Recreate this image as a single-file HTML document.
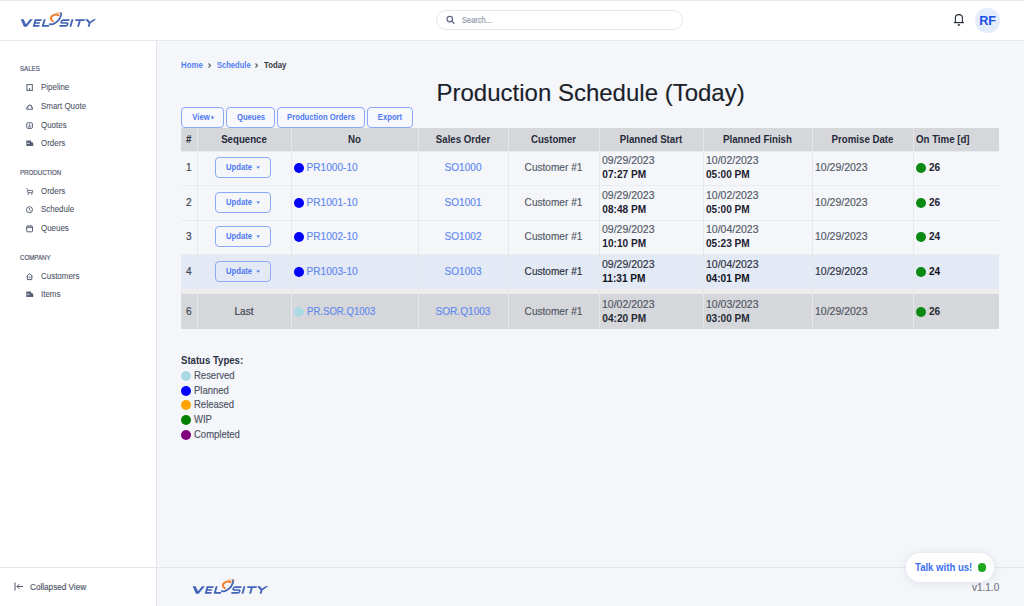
<!DOCTYPE html>
<html><head><meta charset="utf-8">
<style>
*{box-sizing:border-box;margin:0;padding:0}
html,body{width:1024px;height:606px;overflow:hidden;background:#fff;font-family:"Liberation Sans",sans-serif;color:#333}
.abs{position:absolute}
.t{position:absolute;white-space:nowrap;line-height:1}
.r{-webkit-text-stroke:0.15px currentColor}
#topline{left:0;top:0;width:1024px;height:1px;background:#e9eaea}
#header{left:0;top:1px;width:1024px;height:40px;background:#fff;border-bottom:1px solid #e6e8ef}
#sidebar{left:0;top:41px;width:157px;height:565px;background:#fff;border-right:1px solid #e4e6ee}
#main{left:157px;top:41px;width:867px;height:526px;background:#f4f6fa}
#footer{left:157px;top:567px;width:867px;height:39px;background:#f4f6fa;border-top:1px solid #e4e6ee}
#sfoot{left:0;top:567px;width:156px;height:39px;background:#fff;border-top:1px solid #e4e6ee}
.search{left:436px;top:10px;width:247px;height:20px;border:1px solid #e2e5ec;border-radius:10px;background:#fff}
.btn{position:absolute;height:21px;border:1px solid #8aa9f8;border-radius:4px;background:#f6f8fd}
.dot{position:absolute;width:10px;height:10px;border-radius:50%}
</style></head><body>
<div id="topline" class="abs"></div>
<div id="header" class="abs"></div>
<div id="sidebar" class="abs"></div>
<div id="main" class="abs"></div>
<div id="sfoot" class="abs"></div>
<div id="footer" class="abs"></div>
<div class="abs search"></div>
<svg class="abs" style="left:446px;top:15px" width="10" height="10" viewBox="0 0 10 10"><circle cx="3.8" cy="4.1" r="2.75" fill="none" stroke="#5f6883" stroke-width="1.2"/><line x1="5.8" y1="6.1" x2="7.9" y2="8.3" stroke="#5f6883" stroke-width="1.3" stroke-linecap="round"/></svg>
<div class="t r" style="top:16px;font-size:8.3px;color:#8d94a6;left:461.50px;transform:scaleX(0.9);transform-origin:0 0;">Search...</div>
<svg class="abs" style="left:948px;top:10px" width="22" height="20" viewBox="948 10 22 20"><path d="M955.4 22.3 V17.6 C955.4 15.6 957 14.6 958.9 14.6 C960.8 14.6 962.4 15.6 962.4 17.6 V22.3" fill="none" stroke="#252a38" stroke-width="1.1"/><path d="M953.9 22.6 H963.9" stroke="#252a38" stroke-width="1.2"/><path d="M957.5 24.2 H960.3 Q960 25.9 958.9 25.9 Q957.8 25.9 957.5 24.2 Z" fill="#252a38"/></svg>
<div class="abs" style="left:975px;top:8px;width:24.5px;height:24.5px;border-radius:50%;background:#e4ecfc"></div>
<div class="t" style="top:15px;font-size:12.6px;color:#1a52e4;font-weight:bold;left:979.20px;">RF</div>
<div class="t r" style="top:66px;font-size:6.4px;color:#596075;left:19.80px;transform:scaleX(0.96);transform-origin:0 0;-webkit-text-stroke:0.2px #596075;">SALES</div>
<div class="t r" style="top:83px;font-size:8.6px;color:#4d5467;left:40.80px;transform:scaleX(0.925);transform-origin:0 0;-webkit-text-stroke:0.08px #4d5467;">Pipeline</div>
<svg class="abs" style="left:26px;top:83.7px" width="7" height="7" viewBox="0 0 7 7"><rect x="0.9" y="0.6" width="5.4" height="6" fill="none" stroke="#566076" stroke-width="1"/><rect x="3.1" y="4.2" width="1.1" height="1.8" fill="#566076"/></svg>
<div class="t r" style="top:102px;font-size:8.6px;color:#4d5467;left:40.80px;transform:scaleX(0.925);transform-origin:0 0;-webkit-text-stroke:0.08px #4d5467;">Smart Quote</div>
<svg class="abs" style="left:26px;top:102.7px" width="7" height="7" viewBox="0 0 7 7"><path d="M0.9 6.2 C0.6 5 1.2 4.1 2 3.9 C2.3 2.6 3 2 3.8 2 C4.8 2 5.5 2.9 5.5 3.9 C6.2 4.1 6.6 5.2 6.2 6.2 Z" fill="none" stroke="#566076" stroke-width="1.1"/></svg>
<div class="t r" style="top:121px;font-size:8.6px;color:#4d5467;left:40.80px;transform:scaleX(0.925);transform-origin:0 0;-webkit-text-stroke:0.08px #4d5467;">Quotes</div>
<svg class="abs" style="left:26px;top:121.7px" width="7" height="7" viewBox="0 0 7 7"><rect x="0.8" y="0.8" width="5.6" height="5.6" rx="1" fill="none" stroke="#566076" stroke-width="1"/><path d="M2 4.9 H5.2" stroke="#566076" stroke-width="0.9"/><rect x="2.9" y="2.3" width="1.4" height="1.5" fill="#566076"/></svg>
<div class="t r" style="top:139px;font-size:8.6px;color:#4d5467;left:40.80px;transform:scaleX(0.925);transform-origin:0 0;-webkit-text-stroke:0.08px #4d5467;">Orders</div>
<svg class="abs" style="left:26px;top:139.7px" width="8" height="7" viewBox="0 0 8 7"><path d="M0.3 0.5 H5 V2 H6.2 L7.3 3.6 V6 H0.3 Z" fill="#566076"/><path d="M1 3.3 H3.5" stroke="#fff" stroke-width="0.8"/></svg>
<div class="t r" style="top:170px;font-size:6.4px;color:#596075;left:19.80px;transform:scaleX(0.96);transform-origin:0 0;-webkit-text-stroke:0.2px #596075;">PRODUCTION</div>
<div class="t r" style="top:187px;font-size:8.6px;color:#4d5467;left:40.80px;transform:scaleX(0.925);transform-origin:0 0;-webkit-text-stroke:0.08px #4d5467;">Orders</div>
<svg class="abs" style="left:26px;top:187.7px" width="8" height="8" viewBox="0 0 8 8"><path d="M0.4 0 L1.7 1.4 V4.6 H6.6 V2.4 H1.9" fill="none" stroke="#566076" stroke-width="0.85"/><circle cx="2.5" cy="5.9" r="0.75" fill="#566076"/><circle cx="5.8" cy="5.9" r="0.75" fill="#566076"/></svg>
<div class="t r" style="top:205px;font-size:8.6px;color:#4d5467;left:40.80px;transform:scaleX(0.925);transform-origin:0 0;-webkit-text-stroke:0.08px #4d5467;">Schedule</div>
<svg class="abs" style="left:26px;top:206.2px" width="8" height="8" viewBox="0 0 8 8"><circle cx="3.5" cy="3.7" r="3" fill="none" stroke="#566076" stroke-width="1"/><path d="M3.5 2 V3.8 L4.8 4.8" fill="none" stroke="#566076" stroke-width="0.9"/></svg>
<div class="t r" style="top:224px;font-size:8.6px;color:#4d5467;left:40.80px;transform:scaleX(0.925);transform-origin:0 0;-webkit-text-stroke:0.08px #4d5467;">Queues</div>
<svg class="abs" style="left:26px;top:224.7px" width="8" height="8" viewBox="0 0 8 8"><rect x="0.7" y="1" width="5.8" height="5.8" rx="0.8" fill="none" stroke="#566076" stroke-width="1"/><path d="M0.7 2.6 H6.5 M2.2 0.2 V1.6 M5 0.2 V1.6" stroke="#566076" stroke-width="0.9"/></svg>
<div class="t r" style="top:255px;font-size:6.4px;color:#596075;left:19.80px;transform:scaleX(0.96);transform-origin:0 0;-webkit-text-stroke:0.2px #596075;">COMPANY</div>
<div class="t r" style="top:272px;font-size:8.6px;color:#4d5467;left:40.80px;transform:scaleX(0.925);transform-origin:0 0;-webkit-text-stroke:0.08px #4d5467;">Customers</div>
<svg class="abs" style="left:26px;top:272.7px" width="8" height="8" viewBox="0 0 8 8"><path d="M0.6 3.4 L3.6 0.7 L6.6 3.4 M1.4 2.8 V6.6 H5.8 V2.8" fill="none" stroke="#566076" stroke-width="1"/><path d="M2.6 4.8 C2.6 3.8 4.6 3.8 4.6 4.8" fill="none" stroke="#566076" stroke-width="0.9"/></svg>
<div class="t r" style="top:290px;font-size:8.6px;color:#4d5467;left:40.80px;transform:scaleX(0.925);transform-origin:0 0;-webkit-text-stroke:0.08px #4d5467;">Items</div>
<svg class="abs" style="left:26px;top:291.0px" width="8" height="7" viewBox="0 0 8 7"><path d="M0.3 0.5 H5 V2 H6.2 L7.3 3.6 V6 H0.3 Z" fill="#566076"/><path d="M1 3.3 H3.5" stroke="#fff" stroke-width="0.8"/></svg>
<div class="t" style="top:61px;font-size:8.5px;color:#5680f2;font-weight:bold;left:181.00px;transform:scaleX(0.92);transform-origin:0 0;">Home</div>
<div class="t" style="top:61px;font-size:8.5px;color:#5680f2;font-weight:bold;left:216.60px;transform:scaleX(0.89);transform-origin:0 0;">Schedule</div>
<div class="t" style="top:61px;font-size:8.5px;color:#343946;font-weight:bold;left:263.70px;transform:scaleX(0.92);transform-origin:0 0;">Today</div>
<svg class="abs" style="left:207.3px;top:61.5px" width="5" height="7" viewBox="0 0 5 7"><path d="M1.5 1.5 L3.5 3.5 L1.5 5.5" fill="none" stroke="#5c6272" stroke-width="1.15"/></svg>
<svg class="abs" style="left:254.3px;top:61.5px" width="5" height="7" viewBox="0 0 5 7"><path d="M1.5 1.5 L3.5 3.5 L1.5 5.5" fill="none" stroke="#5c6272" stroke-width="1.15"/></svg>
<div class="t r" style="top:81px;font-size:24px;color:#1b1f2b;left:436.50px;">Production Schedule (Today)</div>
<div class="btn" style="left:181px;top:107px;width:43px"></div>
<div class="t" style="top:113px;font-size:8.3px;color:#4f78f0;font-weight:bold;left:170.50px;width:60px;text-align:center;transform:scaleX(0.925);transform-origin:50% 0;">View</div>
<svg class="abs" style="left:210.5px;top:115px" width="4" height="5" viewBox="0 0 4 5"><path d="M0.6 0.4 L3.2 2.5 L0.6 4.6 Z" fill="#4f78f0"/></svg>
<div class="btn" style="left:226px;top:107px;width:49px"></div>
<div class="t" style="top:113px;font-size:8.3px;color:#4f78f0;font-weight:bold;left:200.50px;width:100px;text-align:center;transform:scaleX(0.925);transform-origin:50% 0;">Queues</div>
<div class="btn" style="left:277px;top:107px;width:88px"></div>
<div class="t" style="top:113px;font-size:8.3px;color:#4f78f0;font-weight:bold;left:271.00px;width:100px;text-align:center;transform:scaleX(0.925);transform-origin:50% 0;">Production Orders</div>
<div class="btn" style="left:367px;top:107px;width:45.5px"></div>
<div class="t" style="top:113px;font-size:8.3px;color:#4f78f0;font-weight:bold;left:339.75px;width:100px;text-align:center;transform:scaleX(0.925);transform-origin:50% 0;">Export</div>
<div class="abs" style="left:181px;top:128px;width:818px;height:22.5px;background:#d6d7da"></div>
<div class="abs" style="left:181px;top:150.5px;width:818px;height:34.80000000000001px;background:#f4f6fa;border-top:1px solid #e9ebf0"></div>
<div class="abs" style="left:181px;top:185.3px;width:818px;height:34.29999999999998px;background:#f4f6fa;border-top:1px solid #e9ebf0"></div>
<div class="abs" style="left:181px;top:219.6px;width:818px;height:34.599999999999994px;background:#f4f6fa;border-top:1px solid #e9ebf0"></div>
<div class="abs" style="left:181px;top:254.2px;width:818px;height:34.80000000000001px;background:#e3e9f5;border-top:1px solid #e9ebf0"></div>
<div class="abs" style="left:181px;top:289px;width:818px;height:5px;background:#ececec"></div>
<div class="abs" style="left:181px;top:294px;width:818px;height:35px;background:#d6d7da"></div>
<div class="abs" style="left:197px;top:128px;width:1px;height:201px;background:#e6e8ed"></div>
<div class="abs" style="left:291px;top:128px;width:1px;height:201px;background:#e6e8ed"></div>
<div class="abs" style="left:418px;top:128px;width:1px;height:201px;background:#e6e8ed"></div>
<div class="abs" style="left:508px;top:128px;width:1px;height:201px;background:#e6e8ed"></div>
<div class="abs" style="left:599px;top:128px;width:1px;height:201px;background:#e6e8ed"></div>
<div class="abs" style="left:703px;top:128px;width:1px;height:201px;background:#e6e8ed"></div>
<div class="abs" style="left:812px;top:128px;width:1px;height:201px;background:#e6e8ed"></div>
<div class="abs" style="left:913px;top:128px;width:1px;height:201px;background:#e6e8ed"></div>
<div class="t" style="top:135px;font-size:10.2px;color:#252b3a;font-weight:bold;left:185.50px;transform:scaleX(0.95);transform-origin:0 0;">#</div>
<div class="t" style="top:135px;font-size:10.2px;color:#252b3a;font-weight:bold;left:197.00px;width:94px;text-align:center;transform:scaleX(0.95);transform-origin:50% 0;">Sequence</div>
<div class="t" style="top:135px;font-size:10.2px;color:#252b3a;font-weight:bold;left:291.00px;width:127px;text-align:center;transform:scaleX(0.95);transform-origin:50% 0;">No</div>
<div class="t" style="top:135px;font-size:10.2px;color:#252b3a;font-weight:bold;left:418.00px;width:90px;text-align:center;transform:scaleX(0.95);transform-origin:50% 0;">Sales Order</div>
<div class="t" style="top:135px;font-size:10.2px;color:#252b3a;font-weight:bold;left:508.00px;width:91px;text-align:center;transform:scaleX(0.95);transform-origin:50% 0;">Customer</div>
<div class="t" style="top:135px;font-size:10.2px;color:#252b3a;font-weight:bold;left:599.00px;width:104px;text-align:center;transform:scaleX(0.95);transform-origin:50% 0;">Planned Start</div>
<div class="t" style="top:135px;font-size:10.2px;color:#252b3a;font-weight:bold;left:703.00px;width:109px;text-align:center;transform:scaleX(0.95);transform-origin:50% 0;">Planned Finish</div>
<div class="t" style="top:135px;font-size:10.2px;color:#252b3a;font-weight:bold;left:812.00px;width:101px;text-align:center;transform:scaleX(0.95);transform-origin:50% 0;">Promise Date</div>
<div class="t" style="top:135px;font-size:10.2px;color:#252b3a;font-weight:bold;left:916.00px;transform:scaleX(0.95);transform-origin:0 0;">On Time [d]</div>
<div class="t r" style="top:163px;font-size:10.1px;color:#3b4150;left:186.00px;">1</div>
<div class="btn" style="left:215px;top:157.0px;width:56px;background:transparent"></div>
<div class="t" style="top:163px;font-size:8.3px;color:#4f78f0;font-weight:bold;left:209.00px;width:60px;text-align:center;transform:scaleX(0.93);transform-origin:50% 0;">Update</div>
<svg class="abs" style="left:256.3px;top:165.8px" width="5" height="4" viewBox="0 0 5 4"><path d="M0.3 0.5 H4.1 L2.2 2.7 Z" fill="#4f78f0"/></svg>
<div class="dot" style="left:293.6px;top:163.0px;background:#0000ff"></div>
<div class="t r" style="top:163px;font-size:10.1px;color:#6189ef;left:306.60px;">PR1000-10</div>
<div class="t r" style="top:163px;font-size:10.1px;color:#6189ef;left:418.00px;width:90px;text-align:center;">SO1000</div>
<div class="t r" style="top:163px;font-size:10.1px;color:#535966;left:508.00px;width:91px;text-align:center;">Customer #1</div>
<div class="t r" style="top:156px;font-size:10.1px;color:#535966;left:602.30px;transform:scaleX(1.04);transform-origin:0 0;">09/29/2023</div>
<div class="t" style="top:170px;font-size:10.1px;color:#1d2130;font-weight:bold;left:602.30px;">07:27 PM</div>
<div class="t r" style="top:156px;font-size:10.1px;color:#535966;left:706.00px;transform:scaleX(1.04);transform-origin:0 0;">10/02/2023</div>
<div class="t" style="top:170px;font-size:10.1px;color:#1d2130;font-weight:bold;left:706.00px;">05:00 PM</div>
<div class="t r" style="top:163px;font-size:10.1px;color:#535966;left:815.00px;transform:scaleX(1.04);transform-origin:0 0;">10/29/2023</div>
<div class="dot" style="left:916px;top:163.0px;background:#0a8a12"></div>
<div class="t" style="top:163px;font-size:10.1px;color:#1d2130;font-weight:bold;left:929.00px;">26</div>
<div class="t r" style="top:198px;font-size:10.1px;color:#3b4150;left:186.00px;">2</div>
<div class="btn" style="left:215px;top:192.0px;width:56px;background:transparent"></div>
<div class="t" style="top:198px;font-size:8.3px;color:#4f78f0;font-weight:bold;left:209.00px;width:60px;text-align:center;transform:scaleX(0.93);transform-origin:50% 0;">Update</div>
<svg class="abs" style="left:256.3px;top:200.8px" width="5" height="4" viewBox="0 0 5 4"><path d="M0.3 0.5 H4.1 L2.2 2.7 Z" fill="#4f78f0"/></svg>
<div class="dot" style="left:293.6px;top:198.0px;background:#0000ff"></div>
<div class="t r" style="top:198px;font-size:10.1px;color:#6189ef;left:306.60px;">PR1001-10</div>
<div class="t r" style="top:198px;font-size:10.1px;color:#6189ef;left:418.00px;width:90px;text-align:center;">SO1001</div>
<div class="t r" style="top:198px;font-size:10.1px;color:#535966;left:508.00px;width:91px;text-align:center;">Customer #1</div>
<div class="t r" style="top:191px;font-size:10.1px;color:#535966;left:602.30px;transform:scaleX(1.04);transform-origin:0 0;">09/29/2023</div>
<div class="t" style="top:205px;font-size:10.1px;color:#1d2130;font-weight:bold;left:602.30px;">08:48 PM</div>
<div class="t r" style="top:191px;font-size:10.1px;color:#535966;left:706.00px;transform:scaleX(1.04);transform-origin:0 0;">10/02/2023</div>
<div class="t" style="top:205px;font-size:10.1px;color:#1d2130;font-weight:bold;left:706.00px;">05:00 PM</div>
<div class="t r" style="top:198px;font-size:10.1px;color:#535966;left:815.00px;transform:scaleX(1.04);transform-origin:0 0;">10/29/2023</div>
<div class="dot" style="left:916px;top:198.0px;background:#0a8a12"></div>
<div class="t" style="top:198px;font-size:10.1px;color:#1d2130;font-weight:bold;left:929.00px;">26</div>
<div class="t r" style="top:232px;font-size:10.1px;color:#3b4150;left:186.00px;">3</div>
<div class="btn" style="left:215px;top:226.0px;width:56px;background:transparent"></div>
<div class="t" style="top:232px;font-size:8.3px;color:#4f78f0;font-weight:bold;left:209.00px;width:60px;text-align:center;transform:scaleX(0.93);transform-origin:50% 0;">Update</div>
<svg class="abs" style="left:256.3px;top:234.8px" width="5" height="4" viewBox="0 0 5 4"><path d="M0.3 0.5 H4.1 L2.2 2.7 Z" fill="#4f78f0"/></svg>
<div class="dot" style="left:293.6px;top:232.0px;background:#0000ff"></div>
<div class="t r" style="top:232px;font-size:10.1px;color:#6189ef;left:306.60px;">PR1002-10</div>
<div class="t r" style="top:232px;font-size:10.1px;color:#6189ef;left:418.00px;width:90px;text-align:center;">SO1002</div>
<div class="t r" style="top:232px;font-size:10.1px;color:#535966;left:508.00px;width:91px;text-align:center;">Customer #1</div>
<div class="t r" style="top:225px;font-size:10.1px;color:#535966;left:602.30px;transform:scaleX(1.04);transform-origin:0 0;">09/29/2023</div>
<div class="t" style="top:239px;font-size:10.1px;color:#1d2130;font-weight:bold;left:602.30px;">10:10 PM</div>
<div class="t r" style="top:225px;font-size:10.1px;color:#535966;left:706.00px;transform:scaleX(1.04);transform-origin:0 0;">10/04/2023</div>
<div class="t" style="top:239px;font-size:10.1px;color:#1d2130;font-weight:bold;left:706.00px;">05:23 PM</div>
<div class="t r" style="top:232px;font-size:10.1px;color:#535966;left:815.00px;transform:scaleX(1.04);transform-origin:0 0;">10/29/2023</div>
<div class="dot" style="left:916px;top:232.0px;background:#0a8a12"></div>
<div class="t" style="top:232px;font-size:10.1px;color:#1d2130;font-weight:bold;left:929.00px;">24</div>
<div class="t r" style="top:267px;font-size:10.1px;color:#3b4150;left:186.00px;">4</div>
<div class="btn" style="left:215px;top:261.0px;width:56px;background:transparent"></div>
<div class="t" style="top:267px;font-size:8.3px;color:#4f78f0;font-weight:bold;left:209.00px;width:60px;text-align:center;transform:scaleX(0.93);transform-origin:50% 0;">Update</div>
<svg class="abs" style="left:256.3px;top:269.8px" width="5" height="4" viewBox="0 0 5 4"><path d="M0.3 0.5 H4.1 L2.2 2.7 Z" fill="#4f78f0"/></svg>
<div class="dot" style="left:293.6px;top:267.0px;background:#0000ff"></div>
<div class="t r" style="top:267px;font-size:10.1px;color:#6189ef;left:306.60px;">PR1003-10</div>
<div class="t r" style="top:267px;font-size:10.1px;color:#6189ef;left:418.00px;width:90px;text-align:center;">SO1003</div>
<div class="t r" style="top:267px;font-size:10.1px;color:#2b303c;left:508.00px;width:91px;text-align:center;">Customer #1</div>
<div class="t r" style="top:260px;font-size:10.1px;color:#2b303c;left:602.30px;transform:scaleX(1.04);transform-origin:0 0;">09/29/2023</div>
<div class="t" style="top:274px;font-size:10.1px;color:#10131c;font-weight:bold;left:602.30px;">11:31 PM</div>
<div class="t r" style="top:260px;font-size:10.1px;color:#2b303c;left:706.00px;transform:scaleX(1.04);transform-origin:0 0;">10/04/2023</div>
<div class="t" style="top:274px;font-size:10.1px;color:#10131c;font-weight:bold;left:706.00px;">04:01 PM</div>
<div class="t r" style="top:267px;font-size:10.1px;color:#2b303c;left:815.00px;transform:scaleX(1.04);transform-origin:0 0;">10/29/2023</div>
<div class="dot" style="left:916px;top:267.0px;background:#0a8a12"></div>
<div class="t" style="top:267px;font-size:10.1px;color:#10131c;font-weight:bold;left:929.00px;">24</div>
<div class="t r" style="top:307px;font-size:10.1px;color:#3b4150;left:186.00px;">6</div>
<div class="t r" style="top:307px;font-size:10.1px;color:#3b4150;left:197.00px;width:94px;text-align:center;">Last</div>
<div class="dot" style="left:293.6px;top:307.0px;background:#add8e6"></div>
<div class="t r" style="top:307px;font-size:10.1px;color:#6189ef;left:306.60px;transform:scaleX(0.95);transform-origin:0 0;">PR.SOR.Q1003</div>
<div class="t r" style="top:307px;font-size:10.1px;color:#6189ef;left:418.00px;width:90px;text-align:center;">SOR.Q1003</div>
<div class="t r" style="top:307px;font-size:10.1px;color:#4f5563;left:508.00px;width:91px;text-align:center;">Customer #1</div>
<div class="t r" style="top:300px;font-size:10.1px;color:#4f5563;left:602.30px;transform:scaleX(1.04);transform-origin:0 0;">10/02/2023</div>
<div class="t" style="top:314px;font-size:10.1px;color:#252a36;font-weight:bold;left:602.30px;">04:20 PM</div>
<div class="t r" style="top:300px;font-size:10.1px;color:#4f5563;left:706.00px;transform:scaleX(1.04);transform-origin:0 0;">10/03/2023</div>
<div class="t" style="top:314px;font-size:10.1px;color:#252a36;font-weight:bold;left:706.00px;">03:00 PM</div>
<div class="t r" style="top:307px;font-size:10.1px;color:#4f5563;left:815.00px;transform:scaleX(1.04);transform-origin:0 0;">10/29/2023</div>
<div class="dot" style="left:916px;top:307.0px;background:#0a8a12"></div>
<div class="t" style="top:307px;font-size:10.1px;color:#252a36;font-weight:bold;left:929.00px;">26</div>
<div class="t" style="top:356px;font-size:10.2px;color:#2c3242;font-weight:bold;left:181.20px;transform:scaleX(0.94);transform-origin:0 0;">Status Types:</div>
<div class="dot" style="left:181px;top:371px;background:#add8e6"></div>
<div class="t r" style="top:371px;font-size:10.1px;color:#4d5364;left:193.70px;transform:scaleX(0.94);transform-origin:0 0;">Reserved</div>
<div class="dot" style="left:181px;top:386px;background:#0000ff"></div>
<div class="t r" style="top:386px;font-size:10.1px;color:#4d5364;left:193.70px;transform:scaleX(0.94);transform-origin:0 0;">Planned</div>
<div class="dot" style="left:181px;top:400px;background:#ffa500"></div>
<div class="t r" style="top:400px;font-size:10.1px;color:#4d5364;left:193.70px;transform:scaleX(0.94);transform-origin:0 0;">Released</div>
<div class="dot" style="left:181px;top:415px;background:#008000"></div>
<div class="t r" style="top:415px;font-size:10.1px;color:#4d5364;left:193.70px;transform:scaleX(0.94);transform-origin:0 0;">WIP</div>
<div class="dot" style="left:181px;top:430px;background:#800080"></div>
<div class="t r" style="top:430px;font-size:10.1px;color:#4d5364;left:193.70px;transform:scaleX(0.94);transform-origin:0 0;">Completed</div>
<svg class="abs" style="left:14px;top:582px" width="10" height="9" viewBox="0 0 10 9"><path d="M1 0.5 V8.5" stroke="#4f5568" stroke-width="1"/><path d="M3 4.5 H9 M3 4.5 L5.3 2.2 M3 4.5 L5.3 6.8" stroke="#4f5568" stroke-width="1" fill="none"/></svg>
<div class="t r" style="top:583px;font-size:8.6px;color:#4f5568;left:29.50px;transform:scaleX(0.95);transform-origin:0 0;">Collapsed View</div>
<div class="abs" style="left:906px;top:553px;width:88px;height:29px;border-radius:14.5px;background:#fff;box-shadow:0 1px 8px rgba(40,50,80,0.12)"></div>
<div class="t" style="top:563px;font-size:10.2px;color:#3d6ef0;font-weight:bold;left:915.00px;transform:scaleX(0.94);transform-origin:0 0;">Talk with us!</div>
<div class="dot" style="left:977.5px;top:563px;width:8.5px;height:8.5px;background:#1ea81e"></div>
<div class="t r" style="top:583px;font-size:10.2px;color:#727887;left:972.00px;transform:scaleX(0.98);transform-origin:0 0;">v1.1.0</div>
<svg class="abs" style="left:16px;top:8px" width="84" height="24" viewBox="16 8 84 24"><g fill="#4264b6" transform="matrix(1,0,-0.28,1,7.448,0)"><polygon points="18.6,19.3 21.6,19.3 25.3,24.2 28.0,19.3 30.8,19.3 26.7,26.8 24.0,26.8"/><polygon points="32.7,19.3 39.7,19.3 39.7,21.0 34.6,21.0 34.6,22.2 38.9,22.2 38.9,23.8 34.6,23.8 34.6,25.1 39.3,25.1 39.3,26.8 32.7,26.8"/><polygon points="41.7,19.3 43.6,19.3 43.6,25.1 48.9,25.1 48.9,26.8 41.7,26.8"/><rect x="69.5" y="19.3" width="1.9" height="7.5"/><polygon points="73.5,19.3 82.9,19.3 82.9,21.0 79.1,21.0 79.1,26.8 77.2,26.8 77.2,21.0 73.5,21.0"/><polygon points="83.0,19.3 85.9,19.3 88.6,21.7 91.3,19.3 94.3,19.3 89.6,23.3 89.6,26.8 87.7,26.8 87.7,23.3"/></g><path transform="matrix(1,0,-0.28,1,7.448,0)" d="M67.7 20.15 H61.3 Q59.9 20.15 59.9 21.6 Q59.9 23 61.3 23 H65.6 Q67 23 67 24.5 Q67 25.95 65.6 25.95 H59.2" fill="none" stroke="#4264b6" stroke-width="1.7"/><path d="M49.3 23.5 C50 24.6 52.5 24.6 55.5 22.7 C58.5 20.8 60.5 18 61.2 14.5 C61.3 13.6 61 13.1 60.2 12.9" fill="none" stroke="#4264b6" stroke-width="1.7"/><path d="M59.2 15.6 C57.5 14.4 54.5 14.2 52.3 15.8 C50.2 17.4 50.3 20.6 53.6 21.6" fill="none" stroke="#f0802e" stroke-width="2.1"/><path d="M55.6 13.3 C58 12.6 60.5 12.6 62.5 13.4" fill="none" stroke="#f0802e" stroke-width="1" opacity=".6"/></svg>
<svg class="abs" style="left:187.7px;top:575px" width="84" height="24" viewBox="16 8 84 24"><g fill="#4264b6" transform="matrix(1,0,-0.28,1,7.448,0)"><polygon points="18.6,19.3 21.6,19.3 25.3,24.2 28.0,19.3 30.8,19.3 26.7,26.8 24.0,26.8"/><polygon points="32.7,19.3 39.7,19.3 39.7,21.0 34.6,21.0 34.6,22.2 38.9,22.2 38.9,23.8 34.6,23.8 34.6,25.1 39.3,25.1 39.3,26.8 32.7,26.8"/><polygon points="41.7,19.3 43.6,19.3 43.6,25.1 48.9,25.1 48.9,26.8 41.7,26.8"/><rect x="69.5" y="19.3" width="1.9" height="7.5"/><polygon points="73.5,19.3 82.9,19.3 82.9,21.0 79.1,21.0 79.1,26.8 77.2,26.8 77.2,21.0 73.5,21.0"/><polygon points="83.0,19.3 85.9,19.3 88.6,21.7 91.3,19.3 94.3,19.3 89.6,23.3 89.6,26.8 87.7,26.8 87.7,23.3"/></g><path transform="matrix(1,0,-0.28,1,7.448,0)" d="M67.7 20.15 H61.3 Q59.9 20.15 59.9 21.6 Q59.9 23 61.3 23 H65.6 Q67 23 67 24.5 Q67 25.95 65.6 25.95 H59.2" fill="none" stroke="#4264b6" stroke-width="1.7"/><path d="M49.3 23.5 C50 24.6 52.5 24.6 55.5 22.7 C58.5 20.8 60.5 18 61.2 14.5 C61.3 13.6 61 13.1 60.2 12.9" fill="none" stroke="#4264b6" stroke-width="1.7"/><path d="M59.2 15.6 C57.5 14.4 54.5 14.2 52.3 15.8 C50.2 17.4 50.3 20.6 53.6 21.6" fill="none" stroke="#f0802e" stroke-width="2.1"/><path d="M55.6 13.3 C58 12.6 60.5 12.6 62.5 13.4" fill="none" stroke="#f0802e" stroke-width="1" opacity=".6"/></svg>
</body></html>
